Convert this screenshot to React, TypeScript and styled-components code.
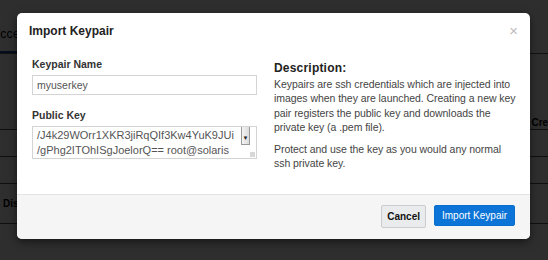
import styled, { createGlobalStyle } from "styled-components";

const GlobalStyle = createGlobalStyle`
  html, body {
    margin: 0;
    padding: 0;
    width: 548px;
    height: 260px;
    overflow: hidden;
    background: #ffffff;
    font-family: "Liberation Sans", Arial, Helvetica, sans-serif;
  }
  * { box-sizing: border-box; }
`;

const Viewport = styled.div`
  position: relative;
  width: 548px;
  height: 260px;
  overflow: hidden;
`;

// the dashboard behind the dialog
const Page = styled.div`
  width: 620px;
  height: 260px;
  margin-left: -8px;
  display: flex;
  flex-direction: column;
  color: #000;
`;

const PageTitle = styled.h2`
  margin: 0;
  padding: 27px 0 0 0;
  height: 44px;
  font-size: 12px;
  font-weight: normal;
  letter-spacing: 0.3px;
`;

const Tabs = styled.div`
  display: flex;
  border-bottom: 1px solid #666;
  height: 10px;
`;

const Tab = styled.div<{ $active?: boolean }>`
  width: 90px;
  border-bottom: 2px solid ${(p) => (p.$active ? "#1b4f9c" : "transparent")};
`;

const Toolbar = styled.div`
  display: flex;
  justify-content: flex-end;
  align-items: center;
  height: 76px;
  padding: 62px 10px 0 0;
  border-bottom: 1px solid #555;
`;

const ToolButton = styled.span`
  font-size: 10px;
  font-weight: bold;
  white-space: nowrap;
`;

const Row = styled.div`
  height: 27px;
  border-bottom: 1px solid #555;
`;

const FootRow = styled.div`
  display: flex;
  align-items: center;
  height: 40px;
  padding-left: 11px;
  border-bottom: 1px solid #555;
  font-size: 10px;
  font-weight: bold;
`;

const Backdrop = styled.div`
  position: absolute;
  inset: 0;
  background: rgba(0, 0, 0, 0.82);
  padding: 13px 0 0 17px;
`;

const Modal = styled.div`
  width: 513px;
  height: 226px;
  background: #fff;
  border-radius: 5px;
  box-shadow: 0 3px 9px rgba(0, 0, 0, 0.5);
  display: flex;
  flex-direction: column;
  overflow: hidden;
`;

const Header = styled.div`
  display: flex;
  justify-content: space-between;
  align-items: center;
  height: 34px;
  padding: 1px 12px 0 12px;
`;

const Title = styled.h3`
  margin: 0;
  font-size: 12px;
  font-weight: bold;
  color: #222;
`;

const Close = styled.span`
  font-size: 15px;
  color: #bbb;
  line-height: 1;
`;

const Body = styled.div`
  flex: 1;
  display: flex;
  gap: 17px;
  padding: 10px 0 0 15px;
`;

const FormCol = styled.div`
  width: 225px;
  display: flex;
  flex-direction: column;
`;

const Label = styled.label<{ $top?: number }>`
  font-size: 10.5px;
  font-weight: bold;
  color: #333;
  line-height: 15px;
  margin-top: ${(p) => p.$top ?? 0}px;
  margin-bottom: 3px;
`;

const Field = styled.div`
  height: 20px;
  border: 1px solid #d4d4d4;
  padding: 0 4px;
  display: flex;
  align-items: center;
  font-size: 10.5px;
  color: #555;
`;

const KeyBox = styled.div`
  position: relative;
  height: 33px;
  border: 1px solid #d4d4d4;
  padding: 1px 18px 0 4px;
  font-size: 11px;
  line-height: 15px;
  color: #555;
  white-space: nowrap;
  overflow: hidden;
`;

const ScrollArrow = styled.span`
  position: absolute;
  right: 6px;
  top: 0;
  width: 9px;
  height: 18px;
  border: 1px solid #9a9a9a;
  border-top: none;
  background: linear-gradient(90deg, #f4f4f4, #dcdcdc);
  display: flex;
  align-items: flex-end;
  justify-content: center;
  padding-bottom: 3px;
  font-size: 6px;
  line-height: 1;
  color: #222;
`;

const Grip = styled.span`
  position: absolute;
  right: 1px;
  bottom: 1px;
  width: 5px;
  height: 5px;
  background: radial-gradient(circle, #aaa 0.6px, transparent 0.8px) 0 0 / 2px 2px;
`;

const DescCol = styled.div`
  width: 244.5px;
  color: #444;
  font-size: 10.5px;
  letter-spacing: -0.05px;
  line-height: 14.4px;
`;

const DescTitle = styled.h4`
  margin: 3px 0 1px 0;
  font-size: 12px;
  font-weight: bold;
  letter-spacing: 0.2px;
  color: #222;
  line-height: 16px;
`;

const Para = styled.p`
  margin: 0 0 7px 0;
`;

const Footer = styled.div`
  height: 45px;
  background: #f5f5f5;
  border-top: 1px solid #e3e3e3;
  display: flex;
  justify-content: flex-end;
  align-items: center;
  gap: 8px;
  padding: 0 15px 2px 0;
`;

const Button = styled.button<{ $primary?: boolean }>`
  height: ${(p) => (p.$primary ? 21 : 23)}px;
  padding: 0 ${(p) => (p.$primary ? 7 : 5)}px;
  border-radius: 2px;
  font-family: inherit;
  font-size: 10px;
  font-weight: ${(p) => (p.$primary ? "normal" : "bold")};
  border: 1px solid ${(p) => (p.$primary ? "#0b6fcf" : "#c9cdd0")};
  background: ${(p) => (p.$primary ? "#0b74d6" : "#e9ebec")};
  color: ${(p) => (p.$primary ? "#fff" : "#111")};
  margin-top: ${(p) => (p.$primary ? -2 : 0)}px;
`;

export default function App() {
  return (
    <>
      <GlobalStyle />
      <Viewport>
        <Page>
          <PageTitle>Access &amp; Security</PageTitle>
          <Tabs>
            <Tab $active />
            <Tab />
          </Tabs>
          <Toolbar>
            <ToolButton>Create Keypair</ToolButton>
          </Toolbar>
          <Row />
          <Row />
          <FootRow>Displaying 2 items</FootRow>
        </Page>
        <Backdrop>
          <Modal>
            <Header>
              <Title>Import Keypair</Title>
              <Close>×</Close>
            </Header>
            <Body>
              <FormCol>
                <Label>Keypair Name</Label>
                <Field>myuserkey</Field>
                <Label $top={13}>Public Key</Label>
                <KeyBox>
                  /J4k29WOrr1XKR3jiRqQIf3Kw4YuK9JUi
                  <br />
                  /gPhg2ITOhISgJoelorQ== root@solaris
                  <ScrollArrow>▼</ScrollArrow>
                  <Grip />
                </KeyBox>
              </FormCol>
              <DescCol>
                <DescTitle>Description:</DescTitle>
                <Para>
                  Keypairs are ssh credentials which are injected into images
                  when they are launched. Creating a new key pair registers the
                  public key and downloads the private key (a .pem file).
                </Para>
                <Para>
                  Protect and use the key as you would any normal ssh private
                  key.
                </Para>
              </DescCol>
            </Body>
            <Footer>
              <Button>Cancel</Button>
              <Button $primary>Import Keypair</Button>
            </Footer>
          </Modal>
        </Backdrop>
      </Viewport>
    </>
  );
}
